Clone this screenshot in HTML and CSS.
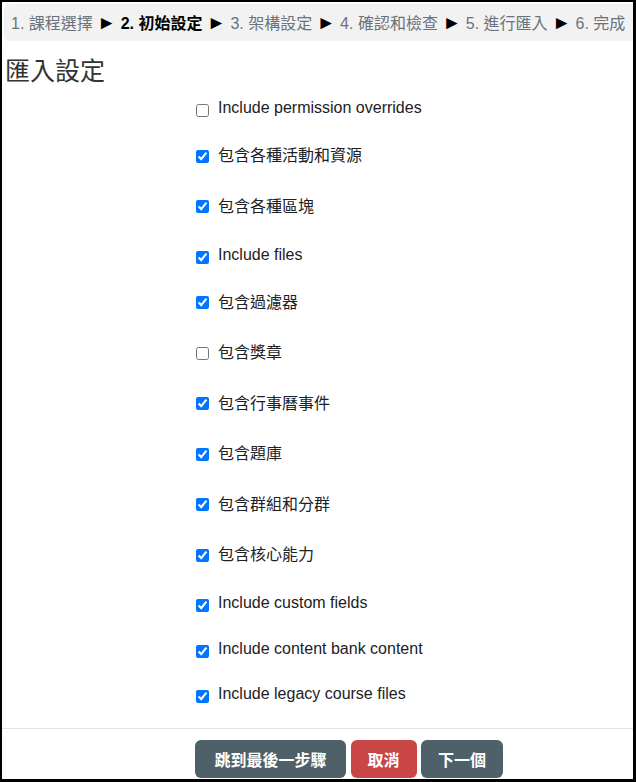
FILE: index.html
```html
<!DOCTYPE html>
<html lang="zh-Hant">
<head>
<meta charset="utf-8">
<title>匯入設定</title>
<link rel="stylesheet" href="styles.css">
</head>
<body>
<div class="frame">
  <nav class="crumbs">
    <span class="step">1. 課程選擇</span>
    <span class="sep">►</span>
    <span class="step current">2. 初始設定</span>
    <span class="sep">►</span>
    <span class="step">3. 架構設定</span>
    <span class="sep">►</span>
    <span class="step">4. 確認和檢查</span>
    <span class="sep">►</span>
    <span class="step">5. 進行匯入</span>
    <span class="sep">►</span>
    <span class="step">6. 完成</span>
  </nav>
  <h2 class="title">匯入設定</h2>
  <div class="options">
    <label class="opt"><input type="checkbox"><span class="txt">Include permission overrides</span></label>
    <label class="opt cjk"><input type="checkbox" checked><span class="txt">包含各種活動和資源</span></label>
    <label class="opt cjk"><input type="checkbox" checked><span class="txt">包含各種區塊</span></label>
    <label class="opt"><input type="checkbox" checked><span class="txt">Include files</span></label>
    <label class="opt cjk"><input type="checkbox" checked><span class="txt">包含過濾器</span></label>
    <label class="opt cjk"><input type="checkbox"><span class="txt">包含獎章</span></label>
    <label class="opt cjk"><input type="checkbox" checked><span class="txt">包含行事曆事件</span></label>
    <label class="opt cjk"><input type="checkbox" checked><span class="txt">包含題庫</span></label>
    <label class="opt cjk"><input type="checkbox" checked><span class="txt">包含群組和分群</span></label>
    <label class="opt cjk"><input type="checkbox" checked><span class="txt">包含核心能力</span></label>
    <label class="opt"><input type="checkbox" checked><span class="txt">Include custom fields</span></label>
    <label class="opt"><input type="checkbox" checked><span class="txt">Include content bank content</span></label>
    <label class="opt"><input type="checkbox" checked><span class="txt">Include legacy course files</span></label>
  </div>
  <div class="actions">
    <button class="btn btn-dark btn-wide" type="button">跳到最後一步驟</button>
    <button class="btn btn-red" type="button">取消</button>
    <button class="btn btn-dark" type="button">下一個</button>
  </div>
</div>
</body>
</html>
```
FILE: styles.css
```css
html, body {
  margin: 0;
  padding: 0;
  background: #fff;
}

body {
  font-family: "Liberation Sans", "Noto Sans CJK TC", sans-serif;
  font-size: 16px;
  color: #1d2125;
}

.frame {
  box-sizing: border-box;
  height: 782px;
  border: 2px solid #000;
  border-right-width: 3px;
  border-bottom-width: 3px;
  padding: 2px 0 0 2px;
  overflow: hidden;
}

.crumbs {
  height: 37px;
  line-height: 37px;
  background: #f2f2f2;
  border-radius: 6px 0 0 6px;
  padding-left: 7px;
  white-space: nowrap;
  color: #6a737b;
}

.crumbs .current {
  font-weight: bold;
  color: #000;
}

.crumbs .sep {
  display: inline-block;
  width: 19px;
  text-align: center;
  font-size: 19px;
  color: #000;
}

.title {
  margin: 15px 0 0 1px;
  font-size: 25px;
  line-height: 30px;
  font-weight: normal;
  color: #333;
}

.options {
  margin-top: 12px;
  padding-left: 192px;
}

.opt {
  display: flex;
  align-items: flex-start;
  margin-bottom: 26.5px;
  line-height: 19px;
}

.opt:last-child {
  margin-bottom: 24.5px;
}

.opt input {
  margin: 6px 0 0 0;
  width: 13px;
  height: 13px;
  flex: none;
}

.opt .txt {
  margin-left: 9px;
}

.opt.cjk .txt {
  padding: 2.5px 0;
}

.actions {
  border-top: 1px solid #dee2e6;
  margin-left: -2px;
  padding: 11px 0 0 193px;
  display: flex;
  gap: 4.5px;
}

.btn {
  height: 38px;
  padding: 0 17px;
  border: none;
  border-radius: 6px;
  font-family: "Liberation Sans", "Noto Sans CJK TC", sans-serif;
  font-size: 16px;
  font-weight: bold;
  color: #fff;
}

.btn-wide {
  padding: 0 19.5px;
}

.btn-dark {
  background: #4f6168;
}

.btn-red {
  background: #c84646;
}
```
